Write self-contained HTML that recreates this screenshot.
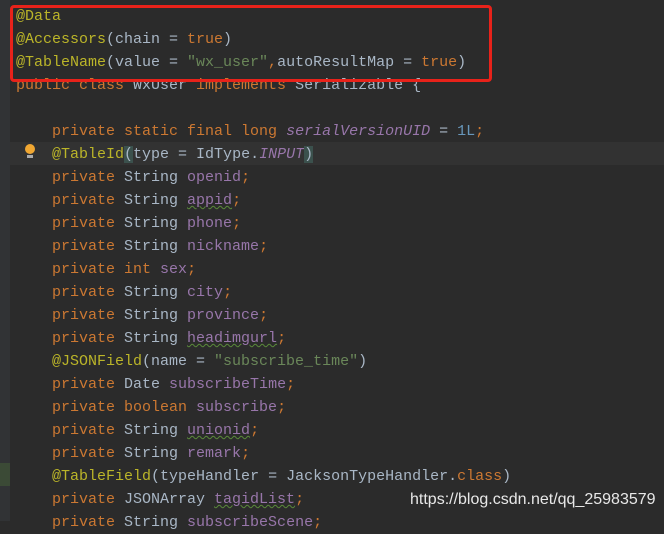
<!DOCTYPE html><html><head><style>
body{margin:0;width:664px;height:521px;background:#2b2b2b;overflow:hidden;position:relative;font-family:"Liberation Mono",monospace;font-size:15px;color:#a9b7c6}
.g{position:absolute;left:0;top:0;width:10px;height:521px;background:#313335}
.l{position:absolute;left:16px;height:23px;line-height:23px;white-space:pre;margin-top:1px}
.a{color:#bbb529}.k{color:#cc7832}.s{color:#6a8759}.f{color:#9876aa}.n{color:#6897bb}.i{font-style:italic}
.w{text-decoration:underline wavy #5a8a3a;text-decoration-thickness:1px}
.hl{position:absolute;left:10px;top:142px;width:654px;height:23px;background:#323232}
.box{position:absolute;left:10px;top:5px;width:476px;height:71px;border:3px solid #e8221a;border-radius:4px}
.wm{position:absolute;left:410px;top:491px;font-family:"Liberation Sans",sans-serif;font-size:16px;color:#e8e8e8}
</style></head><body>
<div class="g"></div>
<div style="position:absolute;left:0;top:463px;width:10px;height:23px;background:#3b4a36"></div>
<div class="hl"></div>
<div class="l a" style="top:4px">@Data</div>
<div class="l" style="top:27px"><span class="a">@Accessors</span>(chain = <span class="k">true</span>)</div>
<div class="l" style="top:50px"><span class="a">@TableName</span>(value = <span class="s">"wx_user"</span><span class="k">,</span>autoResultMap = <span class="k">true</span>)</div>
<div class="l" style="top:73px"><span class="k">public class </span>WxUser <span class="k">implements </span>Serializable {</div>
<div class="l" style="top:119px">    <span class="k">private static final long </span><span class="f i">serialVersionUID</span> = <span class="n">1L</span><span class="k">;</span></div>
<div style="position:absolute;left:25px;top:144px;width:10px;height:10px;border-radius:50%;background:#f0a732"></div>
<div style="position:absolute;left:27px;top:155px;width:6px;height:3px;background:#aaa"></div>
<div class="l" style="top:142px">    <span class="a">@TableId</span><span style="background:#3b514d">(</span>type = IdType.<span class="f i">INPUT</span><span style="background:#3b514d">)</span></div>
<div class="l" style="top:165px">    <span class="k">private </span>String <span class="f">openid</span><span class="k">;</span></div>
<div class="l" style="top:188px">    <span class="k">private </span>String <span class="f w">appid</span><span class="k">;</span></div>
<div class="l" style="top:211px">    <span class="k">private </span>String <span class="f">phone</span><span class="k">;</span></div>
<div class="l" style="top:234px">    <span class="k">private </span>String <span class="f">nickname</span><span class="k">;</span></div>
<div class="l" style="top:257px">    <span class="k">private int </span><span class="f">sex</span><span class="k">;</span></div>
<div class="l" style="top:280px">    <span class="k">private </span>String <span class="f">city</span><span class="k">;</span></div>
<div class="l" style="top:303px">    <span class="k">private </span>String <span class="f">province</span><span class="k">;</span></div>
<div class="l" style="top:326px">    <span class="k">private </span>String <span class="f w">headimgurl</span><span class="k">;</span></div>
<div class="l" style="top:349px">    <span class="a">@JSONField</span>(name = <span class="s">"subscribe_time"</span>)</div>
<div class="l" style="top:372px">    <span class="k">private </span>Date <span class="f">subscribeTime</span><span class="k">;</span></div>
<div class="l" style="top:395px">    <span class="k">private boolean </span><span class="f">subscribe</span><span class="k">;</span></div>
<div class="l" style="top:418px">    <span class="k">private </span>String <span class="f w">unionid</span><span class="k">;</span></div>
<div class="l" style="top:441px">    <span class="k">private </span>String <span class="f">remark</span><span class="k">;</span></div>
<div class="l" style="top:464px">    <span class="a">@TableField</span>(typeHandler = JacksonTypeHandler.<span class="k">class</span>)</div>
<div class="l" style="top:487px">    <span class="k">private </span>JSONArray <span class="f w">tagidList</span><span class="k">;</span></div>
<div class="l" style="top:510px">    <span class="k">private </span>String <span class="f">subscribeScene</span><span class="k">;</span></div>
<div class="box"></div>
<div class="wm">https://blog.csdn.net/qq_25983579</div>
</body></html>
